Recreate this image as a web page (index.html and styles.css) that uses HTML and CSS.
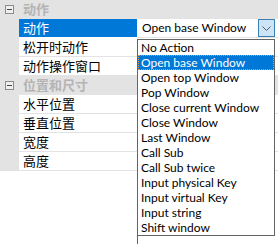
FILE: index.html
```html
<!DOCTYPE html>
<html>
<head>
    <meta charset="utf-8">
    <title>属性</title>
    <link rel="stylesheet" href="styles.css">
</head>
<body>

    <!-- property grid -->
    <div class="grid">

        <div class="cat"><span class="toggle"></span>动作</div>
        <div class="prop">
            <div class="name selected">动作</div>
            <div class="value">
                <span class="value_text">Open base Window</span>
                <span class="drop_btn">
                    <svg width="9" height="5" viewBox="0 0 9 5"><path d="M0.5 0.5 L4.5 4.5 L8.5 0.5" fill="none" stroke="#5a5a5a" stroke-width="1"/></svg>
                </span>
            </div>
        </div>
        <div class="prop"><div class="name">松开时动作</div><div class="value"></div></div>
        <div class="prop"><div class="name">动作操作窗口</div><div class="value"></div></div>

        <div class="cat"><span class="toggle"></span>位置和尺寸</div>
        <div class="prop"><div class="name">水平位置</div><div class="value"></div></div>
        <div class="prop"><div class="name">垂直位置</div><div class="value"></div></div>
        <div class="prop"><div class="name">宽度</div><div class="value"></div></div>
        <div class="prop"><div class="name">高度</div><div class="value"></div></div>
    </div>

    <!-- empty area under the grid -->
    <div class="rest"><div class="rest_left"></div><div class="rest_right"></div></div>

    <!-- open dropdown list -->
    <ul class="dropdown">
        <li>No Action</li>
        <li class="current">Open base Window</li>
        <li>Open top Window</li>
        <li>Pop Window</li>
        <li>Close current Window</li>
        <li>Close Window</li>
        <li>Last Window</li>
        <li>Call Sub</li>
        <li>Call Sub twice</li>
        <li>Input physical Key</li>
        <li>Input virtual Key</li>
        <li>Input string</li>
        <li>Shift window</li>
    </ul>

</body>
</html>
```

FILE: styles.css
```css
/* GLOBAL */
body    {   margin: 0;
            width: 278px;
            height: 244px;
            overflow: hidden;
            position: relative;
            background-color: white;
            color: black;
            font-family: Lato, "Noto Sans CJK SC", sans-serif;
            font-size: 13px;
        }

/* PROPERTY GRID */
.grid   {   background-color: rgb(227, 227, 227); }

.cat    {   height: 19px;
            display: flex;
            align-items: center;
            padding-left: 5px;
            font-weight: bold;
            color: rgb(180, 180, 180);
            line-height: 19px;
        }

.toggle {   width: 7px;
            height: 7px;
            border: 1px solid rgb(140, 140, 140);
            background-color: rgb(240, 240, 240);
            margin-right: 9px;
            position: relative;
            flex: none;
        }
.toggle::after { content: ""; position: absolute; left: 1px; top: 3px; width: 5px; height: 1px; background-color: rgb(70, 70, 70); }

.prop   {   display: flex;
            height: 19px;
            padding-left: 19px;
        }

.name   {   width: 114px;
            padding-left: 4px;
            background-color: white;
            border-bottom: 1px solid rgb(227, 227, 227);
            line-height: 18px;
            white-space: nowrap;
        }
.name.selected { background-color: rgb(0, 120, 215); color: white; border-bottom-color: white; }

.value  {   flex: 1;
            display: flex;
            align-items: center;
            padding-left: 5px;
            background-color: white;
            border-bottom: 1px solid rgb(227, 227, 227);
            line-height: 18px;
            white-space: nowrap;
            font-size: 12px;
        }
.value_text { flex: 1; }

.drop_btn { width: 15px;
            height: 16px;
            margin-right: 3px;
            border: 1px solid rgb(60, 127, 177);
            background-color: rgb(204, 228, 247);
            display: flex;
            align-items: center;
            justify-content: center;
        }

/* below the grid */
.rest       { display: flex; height: 73px; }
.rest_left  { width: 137px; }
.rest_right { flex: 1; border-left: 1px solid rgb(100, 100, 100); }

/* DROPDOWN LIST */
.dropdown   {   position: absolute;
                left: 137px;
                top: 39px;
                width: 136px;
                margin: 0;
                padding: 0;
                list-style: none;
                background-color: white;
                border: 1px solid rgb(100, 100, 100);
                font-size: 12px;
            }
.dropdown li {  height: 15px;
                line-height: 15px;
                padding-left: 3px;
                white-space: nowrap;
            }
.dropdown li.current { background-color: rgb(0, 120, 215); color: white; outline: 1px dotted rgb(240, 150, 50); outline-offset: -1px; }
```
